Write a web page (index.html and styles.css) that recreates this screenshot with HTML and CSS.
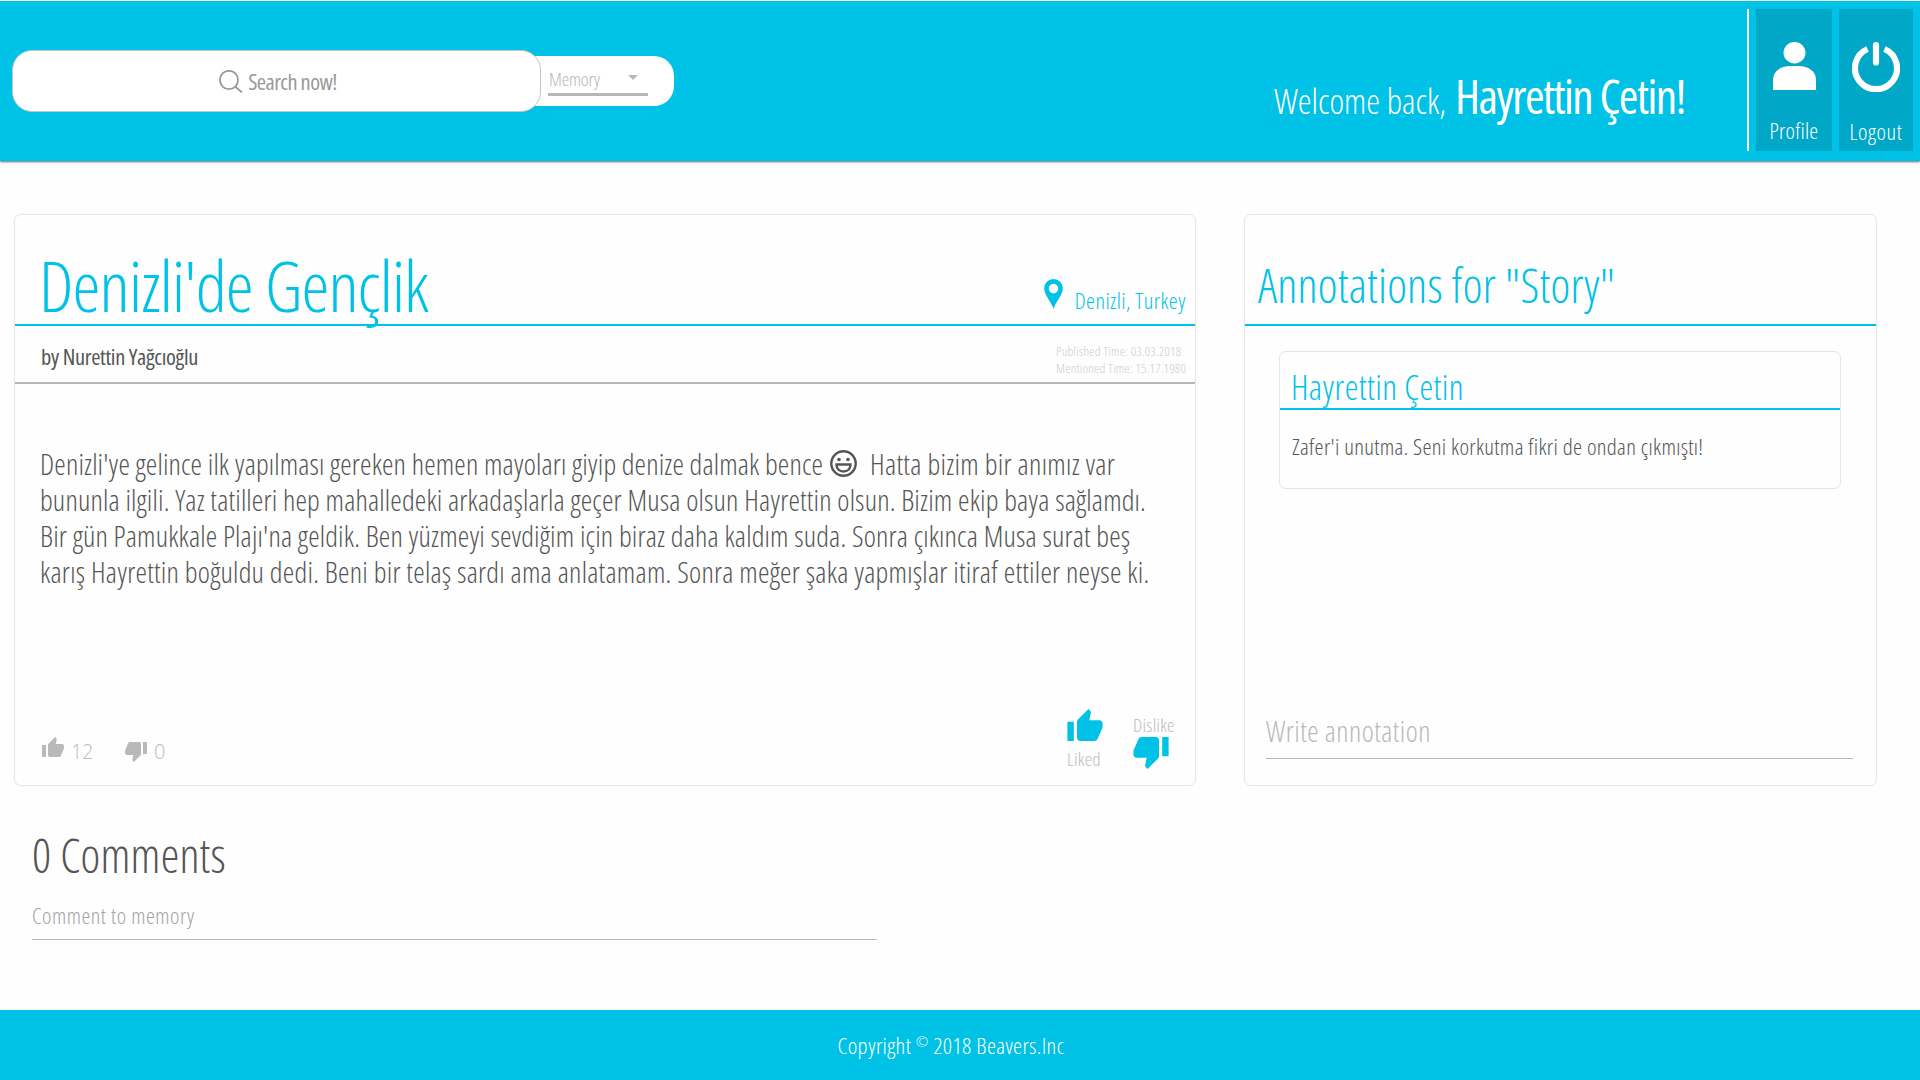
FILE: index.html
```
<!DOCTYPE html>
<html lang="tr">
<head>
<meta charset="utf-8">
<title>Denizli'de Gençlik</title>
<link rel="stylesheet" href="styles.css">
</head>
<body>
<svg class="symbols" aria-hidden="true">
  <symbol id="thumb" viewBox="1 1 22 20"><path d="M1 21h4V9H1v12zm22-11c0-1.1-.9-2-2-2h-6.310l.95-4.570.030-.32c0-.41-.17-.79-.44-1.060L14.170 1 7.590 7.590C7.220 7.950 7 8.450 7 9v10c0 1.100.9 2 2 2h9c.83 0 1.540-.5 1.840-1.220l3.020-7.050c.09-.23.14-.47.14-.73v-2z"/></symbol>
</svg>
<header class="topbar">
  <form class="search">
    <div class="search-box">
      <svg class="search-icon" viewBox="0 0 24 23"><ellipse cx="10" cy="10" rx="9" ry="9.200"/><path d="M16 16.500 23 22.500"/></svg>
      <span class="search-label">Search now!</span>
    </div>
    <div class="scope"><div class="select"><span class="select-value">Memory</span><i class="caret"></i></div></div>
  </form>
  <div class="user">
    <p class="welcome"><span class="hello">Welcome back,</span><strong>Hayrettin Çetin!</strong></p>
    <nav class="actions">
      <a class="action profile"><svg viewBox="0 0 43 48" width="43" height="48"><ellipse cx="21.500" cy="10.700" rx="11" ry="10.700"/><path d="M0 48V38C0 29 8 24 17 24h9c9 0 17 5 17 14v10z"/></svg><span>Profile</span></a>
      <a class="action logout"><svg viewBox="0 0 48 50" width="48" height="50"><path class="ring" d="M15.500 7A21 21 0 1 0 32.500 7"/><path class="stem" d="M24 3.200v17.200"/></svg><span>Logout</span></a>
    </nav>
  </div>
</header>
<main>
  <div class="columns">
    <article class="card memory">
      <header class="card-head memory-head">
        <h1>Denizli'de Gençlik</h1>
        <div class="place"><svg viewBox="0 0 18 29" width="19" height="30"><path fill-rule="evenodd" d="M9 0a9 9 0 0 0-9 9.300C0 15.500 6.500 21.500 9 29c2.500-7.500 9-13.500 9-19.700A9 9 0 0 0 9 0zm0 4.700a4.600 4.600 0 1 1 0 9.200 4.600 4.600 0 0 1 0-9.200z"/></svg><span>Denizli, Turkey</span></div>
      </header>
      <div class="byline">
        <span class="author">by Nurettin Yağcıoğlu</span>
        <div class="times"><span>Published Time: 03.03.2018</span><span>Mentioned Time: 15.17.1980</span></div>
      </div>
      <p class="story">
        <span class="opening"><span>Denizli'ye gelince ilk yapılması gereken hemen mayoları giyip denize dalmak bence</span><svg class="smile" viewBox="0 0 27 27"><circle cx="13.500" cy="13.500" r="12.200"/><path d="M6.500 14.500h14c0 4.500-3 7-7 7s-7-2.500-7-7z"/><circle class="eye" cx="9" cy="9.500" r="1.800"/><circle class="eye" cx="18" cy="9.500" r="1.800"/></svg><span class="aside">Hatta bizim bir anımız var</span></span>
        <span>bununla ilgili. Yaz tatilleri hep mahalledeki arkadaşlarla geçer Musa olsun Hayrettin olsun. Bizim ekip baya sağlamdı.</span>
        <span>Bir gün Pamukkale Plajı'na geldik. Ben yüzmeyi sevdiğim için biraz daha kaldım suda. Sonra çıkınca Musa surat beş</span>
        <span class="closing">karış Hayrettin boğuldu dedi. Beni bir telaş sardı ama anlatamam. Sonra meğer şaka yapmışlar itiraf ettiler neyse ki.</span>
      </p>
      <footer class="reactions">
        <div class="count up"><svg class="thumb"><use href="#thumb"/></svg><span>12</span></div>
        <div class="count down"><svg class="thumb"><use href="#thumb"/></svg><span>0</span></div>
        <div class="react like"><svg class="thumb"><use href="#thumb"/></svg><span>Liked</span></div>
        <div class="react dislike"><span>Dislike</span><svg class="thumb"><use href="#thumb"/></svg></div>
      </footer>
    </article>
    <aside class="card annotations">
      <header class="card-head"><h2>Annotations for "Story"</h2></header>
      <section class="card note">
        <h3>Hayrettin Çetin</h3>
        <p>Zafer'i unutma. Seni korkutma fikri de ondan çıkmıştı!</p>
      </section>
      <div class="field write">Write annotation</div>
    </aside>
  </div>
  <section class="comments">
    <h2>0 Comments</h2>
    <div class="field comment">Comment to memory</div>
  </section>
</main>
<footer class="bottom"><span>Copyright <sup>©</sup> 2018 Beavers.Inc</span></footer>
</body>
</html>
```
FILE: styles.css
```
* { box-sizing: border-box; }
:root { --cyan: #00c1e6; --dark-cyan: #00a7c7; --gray: #b7b7b7; --ink: #555; --edge: #e6e6e6; }
body { margin: 0; height: 1080px; display: flex; flex-direction: column; overflow: hidden; background: #fefefe; color: var(--ink); font-family: "Open Sans", "Noto Sans", sans-serif; font-stretch: 75%; font-weight: 300; }
h1, h2, h3, p { margin: 0; font-weight: 300; }
span, strong, h1, h2 { white-space: nowrap; }
svg { display: block; flex: none; }
.symbols { position: absolute; width: 0; height: 0; }

.topbar { display: flex; justify-content: space-between; height: 160px; margin-top: 1px; background: var(--cyan); box-shadow: 0 1px 2px rgba(0,0,0,.6); flex: none; }
.search { display: flex; align-items: center; padding-left: 12px; }
.search-box { position: relative; z-index: 1; display: flex; align-items: center; justify-content: center; gap: 5px; width: 529px; height: 62px; padding-left: 3px; border: 1px solid #c4c4c4; border-radius: 20px; background: #fff; color: #999; }
.search-icon { width: 24px; height: 23px; fill: none; stroke: #999; stroke-width: 1.800; }
.search-label { font-size: 22.400px; font-weight: 400; letter-spacing: -.55px; }
.scope { width: 153px; height: 50px; margin-left: -20px; padding-left: 27px; border-radius: 0 20px 20px 0; background: #fff; }
.select { display: flex; justify-content: space-between; width: 100px; height: 40px; padding: 8px 10px 0 1px; border-bottom: 3px solid var(--gray); color: var(--gray); font-size: 19px; line-height: 31px; letter-spacing: -.2px; }
.caret { width: 0; height: 0; margin-top: 11px; border: 5px solid transparent; border-top-color: var(--gray); border-bottom: 0; }
.user { display: flex; padding: 8px 7px 0 0; color: #fff; }
.welcome { display: flex; align-items: baseline; gap: 9px; height: 142px; margin-right: 62px; line-height: 60px; padding-top: 57px; }
.hello { font-size: 35px; }
.welcome strong { font-size: 47.500px; font-weight: 400; letter-spacing: -1.55px; }
.actions { display: flex; gap: 7px; height: 142px; padding-left: 7px; border-left: 2px solid #fff; }
.action { display: flex; flex-direction: column; align-items: center; width: 76px; padding-top: 33px; background: var(--dark-cyan); font-size: 22.400px; line-height: 30px; letter-spacing: .25px; }
.action svg { fill: #fff; margin-bottom: 26px; }
.logout { width: 74px; letter-spacing: .65px; }
.logout svg { fill: none; stroke: #fff; stroke-width: 6.200; margin-bottom: 25px; }
.logout .stem { stroke-linecap: round; }

.columns { display: flex; gap: 48px; padding: 53px 0 0 14px; }
.card { border: 1px solid var(--edge); border-radius: 7px; box-shadow: 0 0 1px rgba(0,0,0,.1); }
.memory { display: flex; flex-direction: column; width: 1182px; height: 572px; }
.card-head { display: flex; align-items: flex-end; height: 111px; border-bottom: 2px solid var(--cyan); color: var(--cyan); }
.memory-head { justify-content: space-between; padding: 0 9px 0 24px; }
h1 { font-size: 70.700px; line-height: 79px; letter-spacing: -.95px; }
.place { display: flex; align-items: flex-end; gap: 12px; font-size: 22.400px; line-height: 46px; letter-spacing: .45px; }
.place svg { fill: var(--cyan); margin-bottom: 15px; }
.byline { display: flex; justify-content: space-between; height: 58px; padding: 0 9px 0 26px; border-bottom: 2px solid var(--gray); }
.author { font-size: 22.400px; font-weight: 400; line-height: 62px; letter-spacing: -.3px; }
.times { display: flex; flex-direction: column; width: 130px; padding-top: 17px; color: #ccc; font-size: 13.300px; line-height: 17px; letter-spacing: .2px; }
.story { padding: 62px 0 0 25px; font-size: 29px; line-height: 36px; letter-spacing: .17px; }
.story > span { display: block; }
.story .opening { display: flex; align-items: center; height: 36px; letter-spacing: .14px; }
.story .aside { letter-spacing: .3px; }
.story .closing { letter-spacing: .24px; }
.smile { width: 27px; height: 27px; margin: -2px 13px 0 7px; fill: none; stroke: var(--ink); stroke-width: 2.400; }
.smile .eye { fill: var(--ink); stroke: none; }
.reactions { display: flex; align-items: flex-start; height: 76px; margin-top: auto; padding: 0 21px 0 27px; color: #bbb; }
.count { display: flex; gap: 7px; font-size: 20px; font-stretch: 100%; line-height: 26px; letter-spacing: -.4px; width: 83px; padding-top: 30px; }
.count .thumb { width: 22px; height: 20px; margin-top: -2px; fill: #b9b9b9; }
.count.down .thumb { margin-top: 3px; transform: rotate(180deg); }
.react { display: flex; flex-direction: column; font-size: 19px; line-height: 24px; letter-spacing: .22px; width: 41px; }
.react .thumb { width: 36px; height: 32px; fill: var(--cyan); }
.like { margin-left: auto; margin-right: 25px; }
.like span { margin-top: 6px; }
.dislike { padding-top: 4px; }
.dislike .thumb { transform: rotate(180deg); }

.annotations { display: flex; flex-direction: column; width: 633px; height: 572px; }
.annotations .card-head { padding-left: 13px; }
.annotations h2 { font-size: 47px; line-height: 77px; letter-spacing: .25px; }
.note { width: 562px; height: 138px; margin: 25px 0 0 34px; }
.note h3 { height: 58px; padding: 12px 0 0 11px; border-bottom: 2px solid var(--cyan); color: var(--cyan); font-size: 34.600px; line-height: 45px; letter-spacing: .42px; }
.note p { padding: 22px 0 0 12px; font-size: 22.800px; line-height: 30px; letter-spacing: .32px; }
.field { border-bottom: 1px solid var(--gray); color: #b9b9b9; }
.write { width: 587px; height: 57px; margin: auto 0 26px 21px; padding-left: 0; font-size: 28.700px; line-height: 58px; letter-spacing: .48px; }

.comments { padding: 39px 0 0 32px; }
.comments h2 { font-size: 47px; line-height: 60px; letter-spacing: .2px; }
.comment { width: 845px; margin-top: 7px; color: #a3a3a3; font-size: 22.400px; line-height: 47px; letter-spacing: .5px; }
.bottom { display: flex; align-items: center; justify-content: center; height: 70px; margin-top: auto; padding: 1px 18px 0 0; background: var(--cyan); color: #fff; font-size: 22.800px; letter-spacing: .35px; }
.bottom sup { font-size: 15px; line-height: 0; vertical-align: 7px; }
```
